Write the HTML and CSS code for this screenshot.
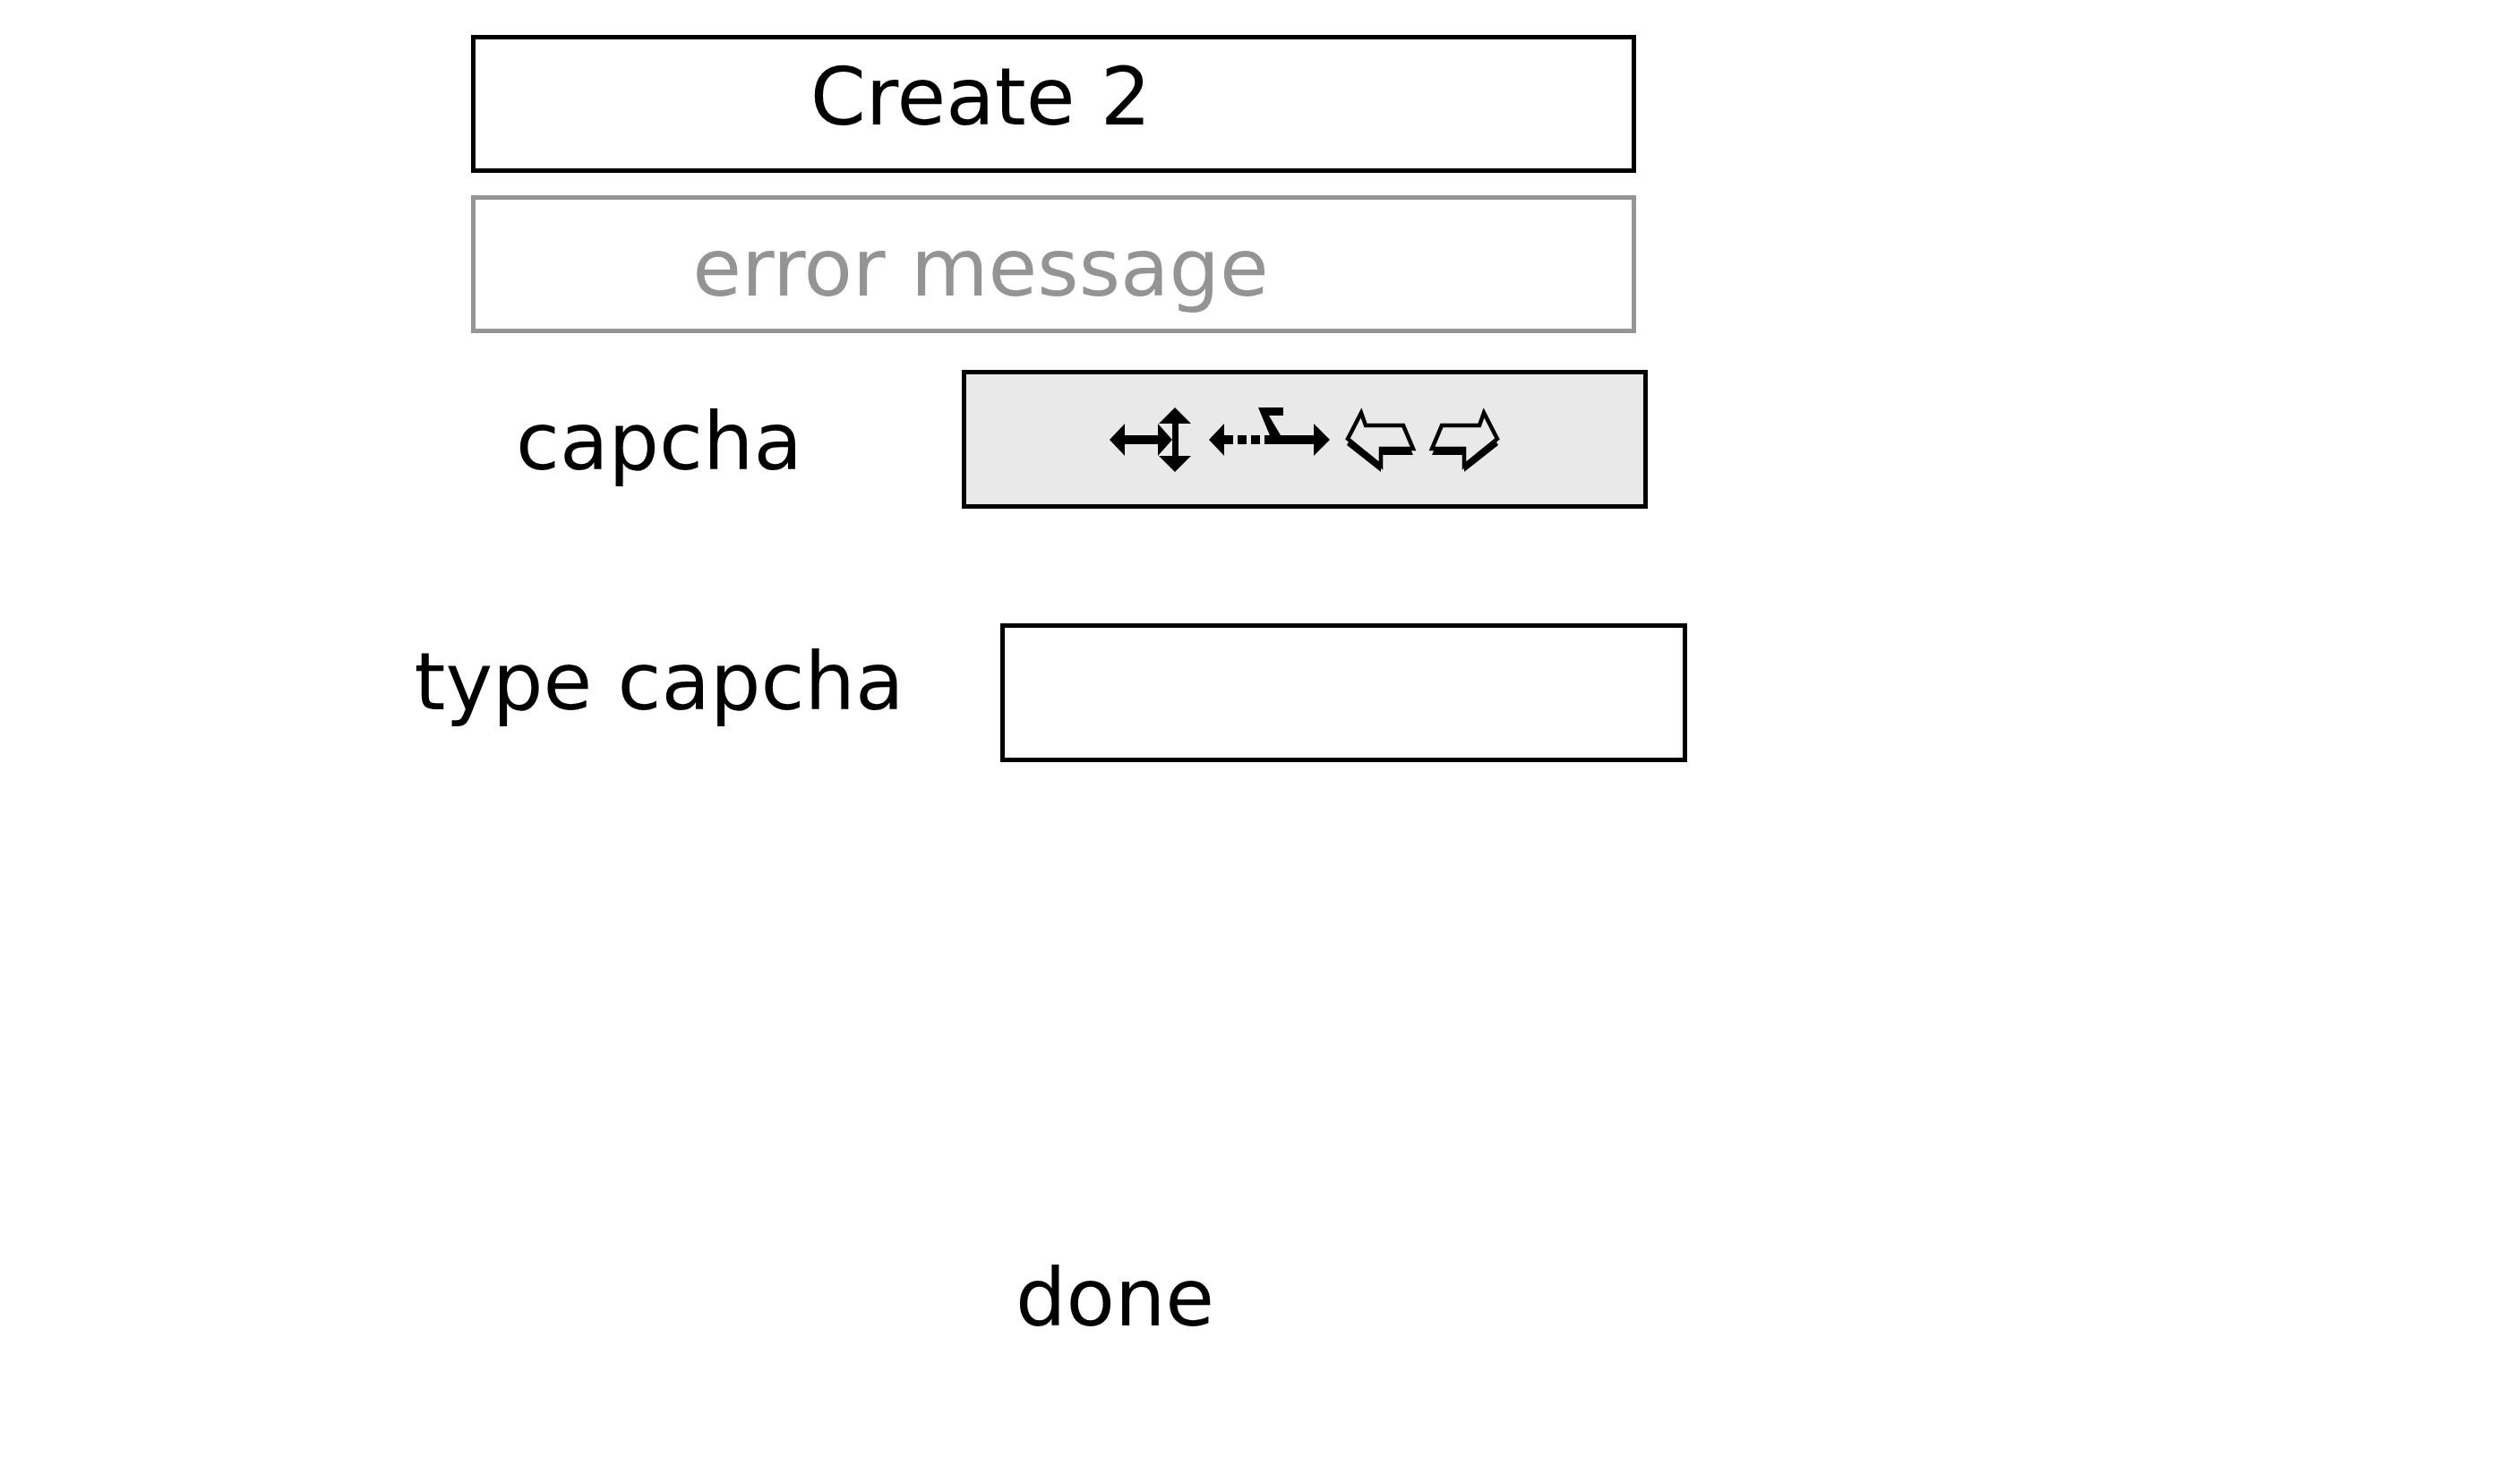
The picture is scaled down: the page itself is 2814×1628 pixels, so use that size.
FILE: index.html
```html
<!DOCTYPE html>
<html>
<head>
<meta charset="utf-8">
<title>Create 2</title>
<link rel="stylesheet" href="styles.css">
</head>
<body>
<div class="page">
  <div class="box title-box">Create 2</div>
  <div class="box error-box">error message</div>
  <div class="row row-captcha">
    <div class="label label-captcha">capcha</div>
    <div class="captcha">
      <svg width="444" height="80" viewBox="0 0 444 80">
        <g fill="#000">
          <polygon points="4,40 21,22 21,35 58,35 58,22 74,40 58,58 58,45 21,45 21,58"/>
          <polygon points="77,4 95,22 81,22 81,58 95,58 77,76 59,58 74,58 74,22 59,22"/>
          <polygon points="115,40 132,22 132,35 142,35 142,45 132,45 132,58"/>
          <rect x="147" y="35" width="10" height="10"/>
          <rect x="162" y="35" width="10" height="10"/>
          <rect x="177" y="35" width="10" height="10"/>
          <polygon points="170,4 198,4 198,13 182,13 195,35 232,35 232,22 250,40 232,58 232,45 187,45"/>
        </g>
        <g>
          <polygon points="269,46 285,17 290,31 332,31 343,57 307,57 307,76" fill="#000"/>
          <polygon points="270,39 285,10 290,24 332,24 343,50 307,50 307,69" fill="#e9e9e9" stroke="#000" stroke-width="4.5" stroke-linejoin="miter"/>
        </g>
        <g transform="translate(707,0) scale(-1,1)">
          <polygon points="269,46 285,17 290,31 332,31 343,57 307,57 307,76" fill="#000"/>
          <polygon points="270,39 285,10 290,24 332,24 343,50 307,50 307,69" fill="#e9e9e9" stroke="#000" stroke-width="4.5" stroke-linejoin="miter"/>
        </g>
      </svg>
    </div>
  </div>
  <div class="row row-input">
    <div class="label label-input">type capcha</div>
    <div class="input-box"></div>
  </div>
  <div class="done">done</div>
</div>
</body>
</html>
```

FILE: styles.css
```css
html, body {
  margin: 0;
  padding: 0;
  background: #ffffff;
}

.page {
  font-family: "Comic Sans MS", "DejaVu Sans", sans-serif;
  font-size: 89px;
  line-height: 100px;
  color: #000;
  padding-top: 39px;
}

.box {
  box-sizing: border-box;
  margin-left: 526px;
  width: 1301px;
  height: 154px;
  border: 5px solid #000;
  text-align: center;
  padding-right: 163px;
}

.title-box {
  padding-top: 14px;
}

.error-box {
  margin-top: 25px;
  border-color: #959595;
  color: #949494;
  padding-top: 26px;
}

.row {
  display: flex;
  align-items: flex-start;
}

.label {
  width: 600px;
  margin-left: 436px;
  text-align: center;
}

.row-captcha {
  margin-top: 41px;
}

.label-captcha {
  margin-top: 30px;
}

.captcha {
  box-sizing: border-box;
  margin-left: 38px;
  width: 766px;
  height: 155px;
  border: 5px solid #000;
  background: #e9e9e9;
  display: flex;
  align-items: center;
  justify-content: center;
}

.captcha svg {
  display: block;
}

.row-input {
  margin-top: 128px;
}

.label-input {
  margin-top: 15px;
}

.input-box {
  box-sizing: border-box;
  margin-left: 81px;
  width: 767px;
  height: 155px;
  border: 5px solid #000;
  background: #fff;
}

.done {
  margin-top: 548px;
  margin-left: 1045px;
  width: 400px;
  text-align: center;
}
```
